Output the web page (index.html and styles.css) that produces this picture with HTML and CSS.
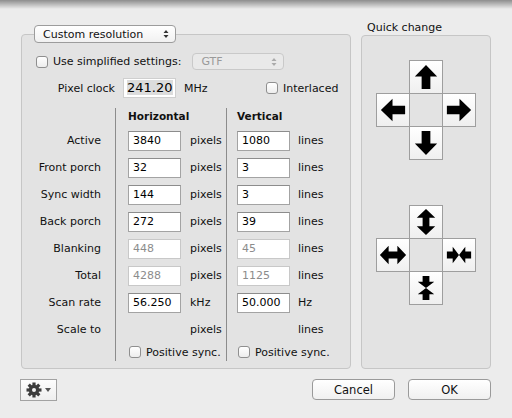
FILE: index.html
```html
<!DOCTYPE html>
<html lang="en">
  <head>
    <meta charset="UTF-8" />
    <title>Custom resolution</title>
    <link rel="stylesheet" href="styles.css">
  </head>
  <body>
    <svg class="defs" width="0" height="0">
      <symbol id="arrow" viewBox="0 0 33 33">
        <path d="M16.5 4 L28 16 L21 16 L21 29 L12 29 L12 16 L5 16 Z" />
      </symbol>
      <symbol id="grow" viewBox="0 0 33 33">
        <path d="M16.5 3 L26 12 L20 12 L20 21 L26 21 L16.5 30 L7 21 L13 21 L13 12 L7 12 Z" />
      </symbol>
      <symbol id="shrink" viewBox="0 0 33 33">
        <path d="M4 13 L10 13 L10 8 L16.5 16.5 L10 25 L10 20 L4 20 Z" />
        <path d="M29 13 L23 13 L23 8 L16.5 16.5 L23 25 L23 20 L29 20 Z" />
      </symbol>
      <symbol id="updown" viewBox="0 0 6 10">
        <path d="M3 1 L5.5 4 L0.5 4 Z M3 9 L5.5 6 L0.5 6 Z" />
      </symbol>
    </svg>

    <div class="sheet">
      <div class="panels">
        <div class="left">
          <div class="popup mode">
            <span>Custom resolution</span>
            <svg class="updown"><use href="#updown" /></svg>
          </div>
          <div class="box main">
            <div class="row simple">
              <label class="check"><span class="cb"></span>Use simplified settings:</label>
              <div class="popup gtf">
                <span>GTF</span>
                <svg class="updown"><use href="#updown" /></svg>
              </div>
            </div>
            <div class="row clock">
              <span class="clock-label">Pixel clock</span>
              <span class="field big"><span class="sel">241.20</span></span>
              <span class="unit mhz">MHz</span>
              <label class="check"><span class="cb"></span>Interlaced</label>
            </div>

            <div class="timing">
              <div class="col labels">
                <div class="head"></div>
                <div class="cell">Active</div>
                <div class="cell">Front porch</div>
                <div class="cell">Sync width</div>
                <div class="cell">Back porch</div>
                <div class="cell">Blanking</div>
                <div class="cell">Total</div>
                <div class="cell">Scan rate</div>
                <div class="cell">Scale to</div>
                <div class="cell last"></div>
              </div>
              <div class="col horiz">
                <div class="head">Horizontal</div>
                <div class="cell"><span class="field">3840</span><span class="unit">pixels</span></div>
                <div class="cell"><span class="field">32</span><span class="unit">pixels</span></div>
                <div class="cell"><span class="field">144</span><span class="unit">pixels</span></div>
                <div class="cell"><span class="field">272</span><span class="unit">pixels</span></div>
                <div class="cell"><span class="field off">448</span><span class="unit">pixels</span></div>
                <div class="cell"><span class="field off">4288</span><span class="unit">pixels</span></div>
                <div class="cell"><span class="field">56.250</span><span class="unit">kHz</span></div>
                <div class="cell"><span class="blank"></span><span class="unit">pixels</span></div>
                <div class="cell last"><label class="check"><span class="cb"></span>Positive sync.</label></div>
              </div>
              <div class="col vert">
                <div class="head">Vertical</div>
                <div class="cell"><span class="field">1080</span><span class="unit">lines</span></div>
                <div class="cell"><span class="field">3</span><span class="unit">lines</span></div>
                <div class="cell"><span class="field">3</span><span class="unit">lines</span></div>
                <div class="cell"><span class="field">39</span><span class="unit">lines</span></div>
                <div class="cell"><span class="field off">45</span><span class="unit">lines</span></div>
                <div class="cell"><span class="field off">1125</span><span class="unit">lines</span></div>
                <div class="cell"><span class="field">50.000</span><span class="unit">Hz</span></div>
                <div class="cell"><span class="blank"></span><span class="unit">lines</span></div>
                <div class="cell last"><label class="check"><span class="cb"></span>Positive sync.</label></div>
              </div>
            </div>
          </div>
        </div>

        <div class="right">
          <div class="caption">Quick change</div>
          <div class="box quick">
            <div class="pad move">
              <span></span>
              <button class="key"><svg><use href="#arrow" /></svg></button>
              <span></span>
              <button class="key"><svg class="r270"><use href="#arrow" /></svg></button>
              <span class="hole"></span>
              <button class="key"><svg class="r90"><use href="#arrow" /></svg></button>
              <span></span>
              <button class="key"><svg class="r180"><use href="#arrow" /></svg></button>
              <span></span>
            </div>
            <div class="pad size">
              <span></span>
              <button class="key"><svg><use href="#grow" /></svg></button>
              <span></span>
              <button class="key"><svg class="r90"><use href="#grow" /></svg></button>
              <span class="hole"></span>
              <button class="key"><svg><use href="#shrink" /></svg></button>
              <span></span>
              <button class="key"><svg class="r90"><use href="#shrink" /></svg></button>
              <span></span>
            </div>
          </div>
        </div>
      </div>

      <div class="buttons">
        <button class="gear">
          <svg width="16" height="16" viewBox="0 0 16 16">
            <g fill="#3c3c3c" transform="translate(8 8)">
              <rect x="-1.6" y="-7.5" width="3.2" height="15" />
              <rect x="-1.6" y="-7.5" width="3.2" height="15" transform="rotate(45)" />
              <rect x="-1.6" y="-7.5" width="3.2" height="15" transform="rotate(90)" />
              <rect x="-1.6" y="-7.5" width="3.2" height="15" transform="rotate(135)" />
              <circle r="5.2" />
              <circle r="2" fill="#f2f2f2" />
            </g>
          </svg>
          <svg width="6" height="4" viewBox="0 0 6 4"><path d="M0 0 L6 0 L3 4 Z" fill="#555" /></svg>
        </button>
        <button class="push cancel">Cancel</button>
        <button class="push ok">OK</button>
      </div>
    </div>
  </body>
</html>
```

FILE: styles.css
```css
body {
  margin: 0;
  width: 512px;
  height: 418px;
  overflow: hidden;
  background: linear-gradient(to bottom, rgba(0, 0, 0, 0.4), rgba(0, 0, 0, 0) 9px), #ececec;
  font-family: "DejaVu Sans", sans-serif;
  font-size: 11px;
  color: #111;
}
.defs {
  position: absolute;
}
.sheet {
  padding: 25px 21px 0 21px;
}
.panels {
  display: flex;
  gap: 10px;
}
.left {
  width: 330px;
}
.right {
  width: 130px;
}
.box {
  box-sizing: border-box;
  border: 1px solid #c6c6c6;
  border-radius: 4px;
  background: #e3e3e3;
}
.main {
  height: 335px;
  margin-top: -9px;
  padding: 18px 0 0 14px;
}
.popup {
  position: relative;
  box-sizing: border-box;
  display: flex;
  align-items: center;
  justify-content: space-between;
  height: 18px;
  padding: 0 6px 0 8px;
  border: 1px solid #9c9c9c;
  border-radius: 4px;
  background: linear-gradient(#ffffff, #f1f1f1);
}
.mode {
  width: 142px;
  margin-left: 13px;
}
.gtf {
  width: 92px;
  height: 17px;
  margin-left: 11px;
  border-color: #c9c9c9;
  background: #e9e9e9;
  color: #9a9a9a;
}
.updown {
  width: 6px;
  height: 10px;
  fill: #333;
}
.gtf .updown {
  fill: #aaa;
}
.row {
  display: flex;
  align-items: center;
}
.simple {
  height: 17px;
}
.clock {
  height: 20px;
  margin-top: 8px;
}
.check {
  display: flex;
  align-items: center;
  white-space: nowrap;
}
.cb {
  box-sizing: border-box;
  width: 12px;
  height: 12px;
  margin-right: 5px;
  border: 1px solid #8f8f8f;
  border-radius: 3px;
  background: linear-gradient(#ffffff, #ededed);
}
.clock-label {
  width: 79px;
  text-align: right;
}
.field {
  box-sizing: border-box;
  display: inline-block;
  width: 53px;
  height: 20px;
  line-height: 18px;
  padding-left: 4px;
  border: 1px solid #a3a3a3;
  border-top-color: #8c8c8c;
  background: #fff;
  color: #000;
}
.field.off {
  border-color: #c8c8c8;
  color: #8c8c8c;
}
.big {
  margin-left: 8px;
  padding-left: 3px;
  border-color: #cfcfcf;
  font-size: 13px;
}
.sel {
  background: #dcdcdc;
}
.unit {
  margin-left: 9px;
}
.mhz {
  width: 82px;
  margin-left: 8px;
}
.timing {
  display: flex;
  margin-top: 10px;
}
.col .head {
  height: 19px;
  line-height: 17px;
  font-weight: bold;
  font-size: 10.5px;
}
.col .cell {
  display: flex;
  align-items: center;
  height: 27px;
}
.col .cell.last {
  height: 18px;
}
.labels {
  width: 65px;
  padding-right: 14px;
}
.labels .cell {
  justify-content: flex-end;
}
.horiz {
  width: 98px;
  padding-left: 12px;
  border-left: 1px solid #8c8c8c;
}
.vert {
  padding-left: 10px;
  border-left: 1px solid #8c8c8c;
}
.vert .unit {
  margin-left: 8px;
}
.horiz .head {
  padding-left: 0;
}
.vert .head {
  padding-left: 0;
}
.blank {
  display: inline-block;
  width: 53px;
}
.last .check {
  padding-left: 1px;
}
.caption {
  height: 14px;
  line-height: 14px;
  margin: -4px 0 0 6px;
}
.quick {
  height: 334px;
  padding-top: 24px;
}
.pad {
  display: grid;
  grid-template-columns: repeat(3, 33px);
  grid-template-rows: repeat(3, 33px);
  width: 100px;
  margin: 0 auto;
}
.size {
  margin-top: 46px;
}
.key {
  box-sizing: border-box;
  width: 34px;
  height: 34px;
  padding: 0;
  border: 1px solid #9e9e9e;
  background: linear-gradient(#ffffff, #efefef);
}
.key svg {
  display: block;
  width: 32px;
  height: 32px;
  fill: #000;
}
.r90 {
  transform: rotate(90deg);
}
.r180 {
  transform: rotate(180deg);
}
.r270 {
  transform: rotate(270deg);
}
.buttons {
  display: flex;
  align-items: flex-start;
  margin-top: 10px;
}
.gear {
  display: flex;
  align-items: center;
  gap: 3px;
  box-sizing: border-box;
  width: 37px;
  height: 22px;
  margin-left: -1px;
  padding: 0 0 0 5px;
  border: 1px solid #a2a2a2;
  background: linear-gradient(#fdfdfd, #eeeeee);
}
.push {
  box-sizing: border-box;
  width: 83px;
  height: 21px;
  border: 1px solid #9a9a9a;
  border-radius: 4px;
  background: linear-gradient(#ffffff, #f0f0f0);
  font-family: "DejaVu Sans", sans-serif;
  font-size: 11.5px;
  color: #111;
}
.cancel {
  margin-left: auto;
}
.ok {
  margin-left: 13px;
}
```
